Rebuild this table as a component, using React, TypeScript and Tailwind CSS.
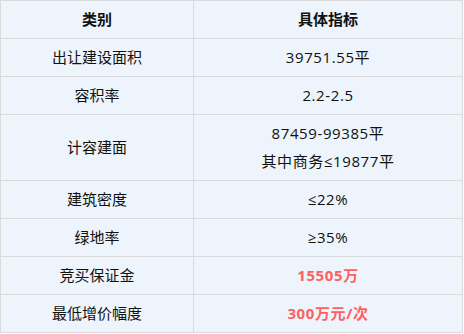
const rows: { label: string; value: string[]; red?: boolean }[] = [
  { label: "出让建设面积", value: ["39751.55平"] },
  { label: "容积率", value: ["2.2-2.5"] },
  { label: "计容建面", value: ["87459-99385平", "其中商务≤19877平"] },
  { label: "建筑密度", value: ["≤22%"] },
  { label: "绿地率", value: ["≥35%"] },
  { label: "竞买保证金", value: ["15505万"], red: true },
  { label: "最低增价幅度", value: ["300万元/次"], red: true },
]

export default function App() {
  return (
    <div className="w-[464px] h-[334px] bg-white">
      <table
        className="w-[463px] border-collapse bg-[#edf4fb] text-[15px] leading-[28px] text-[#111]"
        style={{ fontFamily: '"Open Sans", "Noto Sans CJK SC", sans-serif' }}
      >
        <thead>
          <tr>
            <th className="w-[193px] border border-[#dadada] pt-[4px] pb-[5px] text-center font-bold">类别</th>
            <th className="border border-[#dadada] pt-[4px] pb-[5px] text-center font-bold">具体指标</th>
          </tr>
        </thead>
        <tbody>
          {rows.map((r) => (
            <tr key={r.label}>
              <td className="border border-[#dadada] pt-[4px] pb-[5px] text-center">{r.label}</td>
              <td
                className={`border border-[#dadada] pt-[4px] pb-[5px] text-center tracking-[0.6px] ${
                  r.red ? "font-bold text-[#ff6161]" : ""
                }`}
              >
                {r.value.map((v) => (
                  <div key={v}>{v}</div>
                ))}
              </td>
            </tr>
          ))}
        </tbody>
      </table>
    </div>
  )
}
